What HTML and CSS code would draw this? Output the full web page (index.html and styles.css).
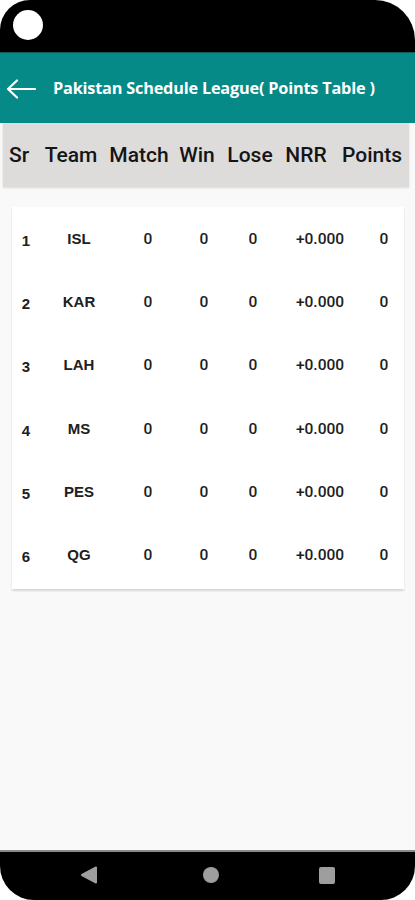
FILE: index.html
```html
<!DOCTYPE html>
<html lang="en">
<head>
    <meta charset="utf-8" />
    <meta name="viewport" content="width=device-width, initial-scale=1" />
    <title>Pakistan Schedule League - Points Table</title>
    <link rel="stylesheet" href="styles.css">
</head>
<body>
    <div class="phone">
        <div class="status-bar">
            <div class="camera"></div>
        </div>

        <header class="app-bar">
            <svg class="back" width="30" height="20" viewBox="0 0 30 20">
                <path d="M29 10H2M11 1.5L2 10l9 8.5" fill="none" stroke="#fff" stroke-width="2.2" stroke-linecap="round" stroke-linejoin="round"/>
            </svg>
            <h1>Pakistan Schedule League( Points Table )</h1>
        </header>

        <main class="content">
            <div class="table-head">
                <span>Sr</span>
                <span>Team</span>
                <span>Match</span>
                <span>Win</span>
                <span>Lose</span>
                <span>NRR</span>
                <span>Points</span>
            </div>

            <div class="card">
                <div class="row"><span class="sr">1</span><span class="team">ISL</span><span>0</span><span>0</span><span>0</span><span>+0.000</span><span>0</span></div>
                <div class="row"><span class="sr">2</span><span class="team">KAR</span><span>0</span><span>0</span><span>0</span><span>+0.000</span><span>0</span></div>
                <div class="row"><span class="sr">3</span><span class="team">LAH</span><span>0</span><span>0</span><span>0</span><span>+0.000</span><span>0</span></div>
                <div class="row"><span class="sr">4</span><span class="team">MS</span><span>0</span><span>0</span><span>0</span><span>+0.000</span><span>0</span></div>
                <div class="row"><span class="sr">5</span><span class="team">PES</span><span>0</span><span>0</span><span>0</span><span>+0.000</span><span>0</span></div>
                <div class="row"><span class="sr">6</span><span class="team">QG</span><span>0</span><span>0</span><span>0</span><span>+0.000</span><span>0</span></div>
            </div>
        </main>

        <nav class="nav-bar">
            <svg width="18" height="20" viewBox="0 0 18 20"><path d="M2 10L16 2.5v15z" fill="#9e9e9e" stroke="#9e9e9e" stroke-width="2" stroke-linejoin="round"/></svg>
            <span class="home"></span>
            <span class="recent"></span>
        </nav>
    </div>
</body>
</html>
```

FILE: styles.css
```css
body {
    margin: 0;
    padding: 0;
    background-color: #fff;
    font-family: Roboto, 'Liberation Sans', sans-serif;
    -webkit-font-smoothing: antialiased;
}

.phone {
    width: 415px;
    height: 900px;
    display: flex;
    flex-direction: column;
    background-color: #fff;
}

.status-bar {
    height: 52px;
    background-color: #000;
    border-radius: 30px 40px 0 0;
    display: flex;
    align-items: center;
    padding-left: 13px;
}

.camera {
    width: 30px;
    height: 30px;
    border-radius: 50%;
    background-color: #fff;
    margin-top: -2px;
}

.app-bar {
    height: 71px;
    background-color: #058a88;
    display: flex;
    align-items: center;
    padding-left: 6px;
    border-top: 1px solid #0d5c5c;
    box-sizing: border-box;
}

.back {
    margin-top: 2px;
}

.app-bar h1 {
    margin: 0 0 0 17px;
    font-family: 'Open Sans', sans-serif;
    font-size: 16.3px;
    font-weight: 700;
    color: #fff;
    letter-spacing: -0.2px;
}

.content {
    flex: 1;
    background-color: #f9f9f9;
}

.table-head {
    margin: 0 6px 0 3px;
    height: 64px;
    background-color: #dedbdb;
    box-shadow: 0 1px 2px rgba(0, 0, 0, 0.12);
    display: grid;
    grid-template-columns: 32px 72px 64px 52px 54px 58px 74px;
    align-items: center;
    justify-items: center;
    font-size: 21px;
    font-weight: 500;
    color: #151515;
}

.card {
    margin: 20px 11px 0 12px;
    background-color: #fff;
    box-shadow: 0 2px 2px rgba(0, 0, 0, 0.14);
    padding-bottom: 2px;
}

.row {
    height: 63.3px;
    display: grid;
    grid-template-columns: 28px 78px 60px 52px 46px 88px 40px;
    align-items: center;
    justify-items: center;
    font-size: 15.5px;
    font-weight: 500;
    color: #202020;
}

.row .sr {
    font-family: 'Liberation Sans', sans-serif;
    font-weight: 700;
    font-size: 15px;
    padding-top: 3px;
}

.row .team {
    font-family: 'Liberation Sans', sans-serif;
    font-weight: 700;
    font-size: 15px;
    padding-bottom: 1px;
}

.nav-bar {
    height: 50px;
    background-color: #000;
    border-top: 2px solid #8a8a8a;
    border-radius: 0 0 34px 34px;
    box-sizing: border-box;
    display: flex;
    align-items: center;
    justify-content: space-between;
    padding: 0 80px 2px 80px;
}

.home {
    width: 16px;
    height: 16px;
    border-radius: 50%;
    background-color: #9e9e9e;
    margin-left: 4px;
}

.recent {
    width: 16px;
    height: 17px;
    border-radius: 2px;
    background-color: #9e9e9e;
}
```
